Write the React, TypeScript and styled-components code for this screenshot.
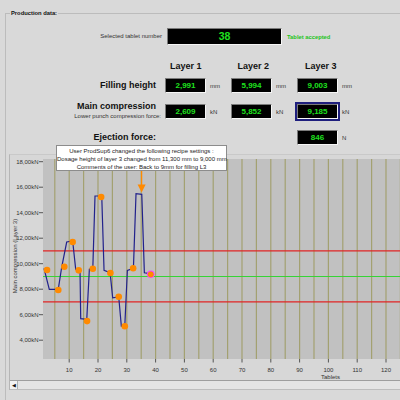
import React from 'react'
import styled, { createGlobalStyle, css } from 'styled-components'

const font = `"Liberation Sans", Arial, sans-serif`

const GlobalStyle = createGlobalStyle`
  html, body {
    margin: 0;
    padding: 0;
  }
  body {
    width: 400px;
    height: 400px;
    overflow: hidden;
    background: #d9d9d9;
    font-family: ${font};
    color: #222;
  }
`

const Page = styled.div`
  width: 400px;
  height: 400px;
  overflow: hidden;
  padding-top: 9px;
  box-sizing: border-box;
`

const Group = styled.fieldset`
  margin: 0 0 0 5px;
  padding: 0;
  min-width: 0;
  border: none;
  border-top: 1px solid #bcbcbc;
  border-left: 1px solid #bcbcbc;
  height: 430px;
`

const Legend = styled.legend`
  margin-left: 4px;
  padding: 0 1px;
  font-size: 5.8px;
  font-weight: bold;
  line-height: 8px;
  color: #111;
`

const TabletRow = styled.div`
  display: flex;
  align-items: center;
  gap: 5px;
  margin-top: 11px;
  height: 17px;
`

const SmallLabel = styled.div<{ $width?: number }>`
  font-size: 6px;
  line-height: 9px;
  color: #333;
  text-align: right;
  ${({ $width }) => $width && `width: ${$width}px;`}
`

const BigBox = styled.div`
  width: 115px;
  height: 17px;
  box-sizing: border-box;
  background: #000;
  border: 1px solid;
  border-color: #7a7a7a #f6f6f6 #f6f6f6 #7a7a7a;
  color: #1fe01f;
  font: bold 10.5px/15px ${font};
  text-align: center;
`

const Accepted = styled.span`
  font-size: 5.8px;
  font-weight: bold;
  color: #22c422;
`

const HeaderRow = styled.div`
  display: flex;
  margin-top: 16px;
  padding-left: 164px;
  height: 11px;
`

const LayerHeader = styled.div`
  width: 67.5px;
  font: bold 9px/11px ${font};
  color: #111;
`

const DataRow = styled.div<{ $top: number; $align?: string }>`
  display: grid;
  grid-template-columns: 156px repeat(3, 63px);
  column-gap: 3px;
  align-items: ${({ $align }) => $align || 'center'};
  margin-top: ${({ $top }) => $top}px;
`

const LabelBlock = styled.div`
  text-align: right;
`

const Heading = styled.div`
  font: bold 9px/11px ${font};
  color: #111;
  padding-right: 6px;
  white-space: nowrap;
`

const SubLabel = styled.div`
  font-size: 6px;
  line-height: 9px;
  color: #333;
  padding-right: 1px;
  white-space: nowrap;
`

const Cell = styled.div<{ $column?: number; $offset?: number }>`
  display: flex;
  align-items: center;
  ${({ $column }) => $column && `grid-column: ${$column};`}
  ${({ $offset }) => $offset && `margin-top: ${$offset}px;`}
`

const ValueBox = styled.div<{ $selected?: boolean }>`
  width: 41px;
  height: 15px;
  box-sizing: border-box;
  background: #000;
  border: 1px solid;
  border-color: #7a7a7a #f6f6f6 #f6f6f6 #7a7a7a;
  color: #1fe01f;
  font: bold 8px/13px ${font};
  text-align: center;
  ${({ $selected }) =>
    $selected &&
    css`
      outline: 2px solid #1f1f7e;
    `}
`

const Unit = styled.span`
  margin-left: 4px;
  font-size: 6px;
  color: #333;
`

const ChartPanel = styled.div`
  position: relative;
  margin: 9px 0 0 3px;
  border-top: 1px solid #c9c9c9;
  border-left: 1px solid #b5b5b5;
  background: #d7d7d7;
`

const ChartSvg = styled.svg`
  display: block;
  font-family: ${font};
`

const Tooltip = styled.div`
  position: absolute;
  left: 46px;
  top: -10px;
  width: 171px;
  height: 26px;
  box-sizing: border-box;
  padding-top: 1px;
  background: #fff;
  border: 1px solid #8c8c8c;
  font-size: 6px;
  line-height: 8px;
  color: #222;
  text-align: center;
  white-space: nowrap;
`

const ScrollBar = styled.div`
  display: flex;
  height: 10px;
  box-sizing: border-box;
  border-top: 1px solid #9e9e9e;
  border-bottom: 1px solid #bdbdbd;
  background: #e4e4e4;
`

const ScrollArrow = styled.div`
  width: 7px;
  display: flex;
  align-items: center;
  justify-content: center;
  background: #f2f2f2;
  border-right: 1px solid #b0b0b0;
  font-size: 5px;
  color: #111;
`

// chart scales, in page pixels
const T0 = 40.4
const TS = 2.88
const V18 = 160.7
const VS = 12.75
const X = (t: number) => T0 + t * TS
const Y = (v: number) => V18 + (18 - v) * VS

const PLOT = { left: 43, top: 158, right: 403, bottom: 358 }

const trace: [number, number][] = [
  [1.25, 9.64], [3.09, 7.99], [6.2, 7.99], [7.4, 9.74], [9.13, 11.7], [11.2, 11.78],
  [12.26, 9.56], [13.75, 9.56], [14, 5.69], [16.1, 5.64], [17, 9.56], [18.2, 9.64],
  [18.96, 15.31], [21.3, 15.31], [22.1, 9.48], [24.2, 9.29], [25.1, 7.33], [27.2, 7.39],
  [28.1, 5.11], [29.3, 5.11], [30.2, 9.48], [32.3, 9.64], [33.2, 15.49], [35.2, 15.44],
  [36.1, 9.29], [38.1, 9.22],
]

const samples: [number, number][] = [
  [2.3, 9.51], [6.2, 7.94], [8.3, 9.76], [11.2, 11.7], [13.3, 9.48], [16.2, 5.5],
  [18.2, 9.6], [21.1, 15.23], [24.3, 9.27], [27.2, 7.41], [29.3, 5.09], [32.2, 9.64],
]

const selected: [number, number] = [38.3, 9.17]

const range = (from: number, to: number, step: number) => {
  const out: number[] = []
  for (let i = from; i <= to; i += step) out.push(i)
  return out
}

const Chart = () => (
  <ChartSvg width={390} height={225}>
    <g transform="translate(-10 -154)">
      <rect x={PLOT.left} y={PLOT.top} width={PLOT.right - PLOT.left} height={PLOT.bottom - PLOT.top} fill="#c1c1c1" />
      {range(5, 125, 5).map(t => (
        <line key={t} x1={X(t)} x2={X(t)} y1={PLOT.top} y2={PLOT.bottom} stroke="#a3a171" strokeWidth={1.2} />
      ))}
      <line x1={PLOT.left} x2={PLOT.right} y1={Y(11)} y2={Y(11)} stroke="#e02424" strokeWidth={1.3} />
      <line x1={PLOT.left} x2={PLOT.right} y1={Y(9)} y2={Y(9)} stroke="#36d436" strokeWidth={1.1} />
      <line x1={PLOT.left} x2={PLOT.right} y1={Y(7)} y2={Y(7)} stroke="#e02424" strokeWidth={1.3} />
      <polyline
        points={trace.map(([t, v]) => `${X(t)},${Y(v)}`).join(' ')}
        fill="none"
        stroke="#22228c"
        strokeWidth={1.2}
      />
      {samples.map(([t, v]) => (
        <circle key={t} cx={X(t)} cy={Y(v)} r={3.3} fill="#ff8a00" />
      ))}
      <circle cx={X(selected[0])} cy={Y(selected[1])} r={3.8} fill="#ff3cff" />
      <circle cx={X(selected[0])} cy={Y(selected[1])} r={2.9} fill="#ff8a00" />
      <line x1={141.6} x2={141.6} y1={PLOT.top} y2={186} stroke="#ff8a00" strokeWidth={1.3} />
      <polygon points="137.6,183.5 145.6,183.5 141.6,191.5" fill="#ff8a00" />

      {range(4, 18, 2).map(v => (
        <g key={v}>
          <line x1={39} x2={43} y1={Y(v)} y2={Y(v)} stroke="#555" strokeWidth={1} />
          <text x={38.5} y={Y(v) + 2} fontSize={6} fill="#333" textAnchor="end">
            {v},00kN
          </text>
        </g>
      ))}
      <text x={17} y={255} fontSize={6} fill="#333" textAnchor="middle" transform="rotate(-90 17 255)">
        Main compression (Layer 3)
      </text>

      {range(10, 120, 10).map(t => (
        <g key={t}>
          <line x1={X(t)} x2={X(t)} y1={PLOT.bottom} y2={361.5} stroke="#555" strokeWidth={1} />
          <text x={X(t)} y={370.5} fontSize={6} fill="#333" textAnchor="middle">
            {t}
          </text>
        </g>
      ))}
      <text x={330.5} y={378} fontSize={6} fill="#333" textAnchor="middle">
        Tablets
      </text>
    </g>
  </ChartSvg>
)

const App: React.FC = () => (
  <Page>
    <GlobalStyle />
    <Group>
      <Legend>Production data:</Legend>

      <TabletRow>
        <SmallLabel $width={156}>Selected tablet number</SmallLabel>
        <BigBox>38</BigBox>
        <Accepted>Tablet accepted</Accepted>
      </TabletRow>

      <HeaderRow>
        <LayerHeader>Layer 1</LayerHeader>
        <LayerHeader>Layer 2</LayerHeader>
        <LayerHeader>Layer 3</LayerHeader>
      </HeaderRow>

      <DataRow $top={6}>
        <LabelBlock>
          <Heading>Filling height</Heading>
        </LabelBlock>
        <Cell><ValueBox>2,991</ValueBox><Unit>mm</Unit></Cell>
        <Cell><ValueBox>5,994</ValueBox><Unit>mm</Unit></Cell>
        <Cell><ValueBox>9,003</ValueBox><Unit>mm</Unit></Cell>
      </DataRow>

      <DataRow $top={8} $align="start">
        <LabelBlock>
          <Heading>Main compression</Heading>
          <SubLabel>Lower punch compression force:</SubLabel>
        </LabelBlock>
        <Cell $offset={3}><ValueBox>2,609</ValueBox><Unit>kN</Unit></Cell>
        <Cell $offset={3}><ValueBox>5,852</ValueBox><Unit>kN</Unit></Cell>
        <Cell $offset={3}><ValueBox $selected>9,185</ValueBox><Unit>kN</Unit></Cell>
      </DataRow>

      <DataRow $top={9}>
        <LabelBlock>
          <Heading>Ejection force:</Heading>
        </LabelBlock>
        <Cell $column={4}><ValueBox>846</ValueBox><Unit>N</Unit></Cell>
      </DataRow>

      <ChartPanel>
        <Chart />
        <ScrollBar>
          <ScrollArrow>◀</ScrollArrow>
        </ScrollBar>
        <Tooltip>
          User ProdSup6 changed the following recipe settings :<br />
          Dosage height of layer 3 changed from 11,300 mm to 9,000 mm<br />
          Comments of the user: Back to 9mm for filling L3
        </Tooltip>
      </ChartPanel>
    </Group>
  </Page>
)

export default App
